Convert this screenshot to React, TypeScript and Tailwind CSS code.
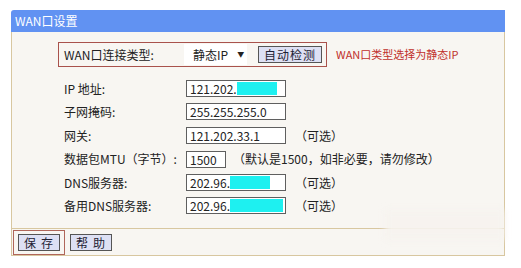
const font = "font-['SimSun','Noto_Sans_CJK_SC',sans-serif]";

function Field({ value, width = "w-[100px]", mask, maskW }: { value: string; width?: string; mask?: boolean; maskW?: string }) {
  return (
    <div className={`${width} h-[17px] border border-[#5f5f5f] bg-white flex items-center pl-[3px] text-[12px] leading-[15px] text-[#222]`}>
      <span>{value}</span>
      {mask ? <span className={`${maskW} h-[13px] bg-[#1ef0f0]`} /> : null}
    </div>
  );
}

function Row({ label, children }: { label: string; children: React.ReactNode }) {
  return (
    <div className="flex h-[23.4px] items-start">
      <div className="w-[174px] whitespace-nowrap pl-[52px] pt-[1px] text-[12px] leading-[16px] text-[#222]">{label}</div>
      <div className="flex items-center">{children}</div>
    </div>
  );
}

function Btn({ children, className = "" }: { children: React.ReactNode; className?: string }) {
  return (
    <div className={`h-[17px] border border-[#555] bg-[#dde0f4] flex items-center justify-center text-[12px] leading-[15px] text-[#1e2233] ${className}`}>
      {children}
    </div>
  );
}

export default function App() {
  return (
    <div className={`relative w-[521px] h-[268px] overflow-hidden bg-white pt-[10px] pl-[11px] ${font}`}>
      <div className="w-[494px] flex flex-col">
        <div className="h-[22px] rounded-tl-[3px] bg-[#6192f2] px-[4px] text-[12px] leading-[22px] text-white">WAN口设置</div>
        <div className="border-x border-b border-[#d8c7a0] bg-[#f8f6f2]">
          <div className="h-[197px] border-b border-[#d8c7a0] pt-[10px]">
            <div className="ml-[46px] flex h-[25px] w-[269px] items-center border border-[#a9524c] text-[12px] text-[#222]">
              <span className="ml-[5px] w-[120px] whitespace-nowrap">WAN口连接类型:</span>
              <div className="flex h-[21px] w-[63px] items-center bg-white pl-[9px]">
                <span>静态IP</span>
                <span className="ml-[9px] text-[7px]">▼</span>
              </div>
              <Btn className="ml-[11px] w-[64px] tracking-[1px]">自动检测</Btn>
            </div>
            <div className="absolute left-[336px] top-[47px] text-[11px] leading-[14px] text-[#c0302c]">WAN口类型选择为静态IP</div>
            <div className="mt-[13px] flex flex-col">
              <Row label="IP 地址:">
                <Field value="121.202." mask maskW="w-[40px]" />
              </Row>
              <Row label="子网掩码:">
                <Field value="255.255.255.0" />
              </Row>
              <Row label="网关:">
                <Field value="121.202.33.1" />
                <span className="ml-[9px] text-[12px] text-[#222]">（可选）</span>
              </Row>
              <Row label="数据包MTU（字节）:">
                <Field value="1500" width="w-[40px]" />
                <span className="ml-[7px] text-[12px] text-[#222]">（默认是1500，如非必要，请勿修改）</span>
              </Row>
              <Row label="DNS服务器:">
                <Field value="202.96." mask maskW="w-[40px]" />
                <span className="ml-[9px] text-[12px] text-[#222]">（可选）</span>
              </Row>
              <Row label="备用DNS服务器:">
                <Field value="202.96." mask maskW="w-[53px]" />
                <span className="ml-[9px] text-[12px] text-[#222]">（可选）</span>
              </Row>
            </div>
          </div>
          <div className="flex h-[26px] items-center pl-[1px]">
            <div className="flex h-[25px] w-[52px] items-center justify-center border border-[#b0665a]">
              <Btn className="w-[42px] tracking-[5px] pl-[4px]">保存</Btn>
            </div>
            <Btn className="ml-[5px] w-[42px] tracking-[5px] pl-[4px]">帮助</Btn>
          </div>
        </div>
      </div>
      <div className="absolute left-[385px] top-[210px] h-[30px] w-[120px] bg-[#f6f3ee]/90 blur-[3px]" />
    </div>
  );
}
